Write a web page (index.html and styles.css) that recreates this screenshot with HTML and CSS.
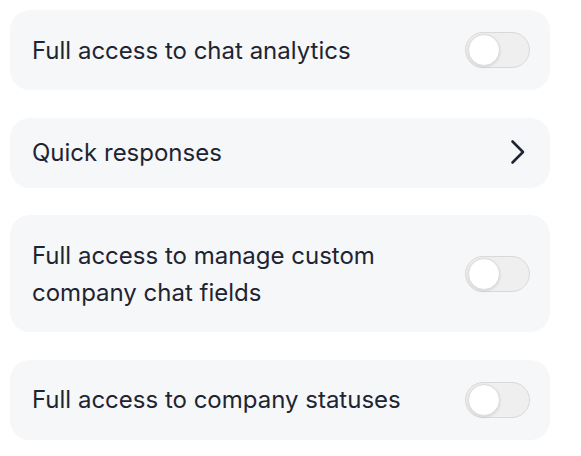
FILE: index.html
```html
<!DOCTYPE html>
<html lang="en">
<head>
<meta charset="utf-8">
<title>Permissions</title>
<link rel="stylesheet" href="styles.css">
</head>
<body>
<div class="list">
  <div class="card">
    <span class="label">Full access to chat analytics</span>
    <span class="toggle"><span class="knob"></span></span>
  </div>
  <div class="card card-link">
    <span class="label">Quick responses</span>
    <svg class="chevron" width="16" height="28" viewBox="0 0 16 28" aria-hidden="true">
      <polyline points="2.5,2.5 13,13 2.5,23.5" fill="none" stroke="#1f2532" stroke-width="2.6" stroke-linecap="round" stroke-linejoin="round"/>
    </svg>
  </div>
  <div class="card">
    <span class="label">Full access to manage custom<br>company chat fields</span>
    <span class="toggle"><span class="knob"></span></span>
  </div>
  <div class="card">
    <span class="label">Full access to company statuses</span>
    <span class="toggle"><span class="knob"></span></span>
  </div>
</div>
</body>
</html>
```
FILE: styles.css
```css
* { box-sizing: border-box; }
html, body { margin: 0; padding: 0; background: #ffffff; }
body {
  font-family: Inter, "Noto Sans", "Liberation Sans", sans-serif;
  color: #1e2432;
  padding: 10px 31px 0 10px;
}
.list {
  display: flex;
  flex-direction: column;
  gap: 27.5px;
}
.card {
  background: #f6f7f9;
  border-radius: 20px;
  padding: 21.5px 20px 21.5px 22px;
  display: flex;
  align-items: center;
  justify-content: space-between;
}
.card-link {
  padding-top: 16.5px;
  padding-bottom: 16.5px;
  padding-right: 24px;
}
.label {
  font-size: 24px;
  line-height: 37px;
}
.toggle {
  position: relative;
  flex: none;
  width: 65px;
  height: 36px;
  border-radius: 18px;
  background: #efefef;
  border: 1px solid #d9d9d9;
}
.knob {
  position: absolute;
  left: 2px;
  top: 1px;
  width: 32px;
  height: 32px;
  border-radius: 50%;
  background: #ffffff;
  border: 1px solid #dcdcdc;
  box-shadow: 0 1px 3px rgba(0,0,0,0.12);
}
.chevron { flex: none; display: block; }
```
